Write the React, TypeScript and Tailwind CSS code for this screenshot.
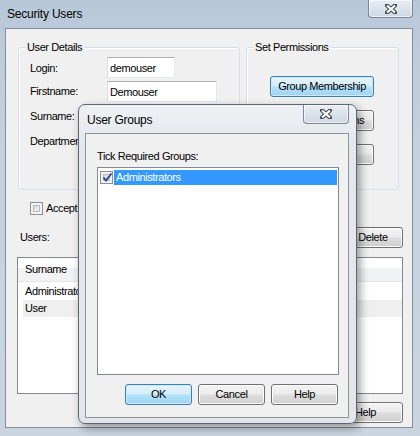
import React from 'react';
import clsx from 'clsx';

const CloseGlyph = () => (
  <svg width="12" height="10" viewBox="0 0 12 10">
    <path d="M2 1.5 L10 8.5 M10 1.5 L2 8.5" stroke="#454a52" strokeWidth="4.2" strokeLinecap="round" />
    <path d="M2 1.5 L10 8.5 M10 1.5 L2 8.5" stroke="#ffffff" strokeWidth="2.2" strokeLinecap="butt" />
  </svg>
);

const CloseBox = ({ className }: { className?: string }) => (
  <div
    className={clsx(
      'flex items-center justify-center rounded-b-[4px] border border-t-0 border-[#7d8894] bg-[linear-gradient(180deg,#e9eef4_0%,#d9e1ea_55%,#cfd8e3_100%)] shadow-[inset_0_0_0_1px_rgba(255,255,255,0.6)]',
      className
    )}
  >
    <CloseGlyph />
  </div>
);

const WinButton = ({
  children,
  focused,
  className,
}: {
  children: React.ReactNode;
  focused?: boolean;
  className?: string;
}) => (
  <button
    className={clsx(
      'flex h-[21px] items-center justify-center overflow-hidden whitespace-nowrap rounded-[3px] border text-[11px] leading-none tracking-[-0.4px] text-black',
      focused
        ? 'border-[#3c7fb1] bg-[linear-gradient(180deg,#e5f4fc_0%,#d4eefb_48%,#b3e0f9_52%,#9fd5f4_100%)] shadow-[inset_0_0_0_1px_#cdebfb]'
        : 'border-[#707070] bg-[linear-gradient(180deg,#f2f2f2_0%,#ebebeb_48%,#dddddd_52%,#cfcfcf_100%)] shadow-[inset_0_0_0_1px_#fcfcfc]',
      className
    )}
  >
    {children}
  </button>
);

const CheckBox = ({ checked }: { checked?: boolean }) => (
  <span className="flex h-[13px] w-[13px] shrink-0 border border-[#8e8f8f] bg-[#f4f4f4] p-[2px]">
    <span className="relative flex h-full w-full items-center justify-center border border-[#b6b9bd] bg-[linear-gradient(135deg,#d6d8db_0%,#f5f5f5_100%)]">
      {checked && (
        <svg className="absolute left-[-2px] top-[-3px]" width="11" height="11" viewBox="0 0 11 11">
          <path d="M1.5 5.5 L4 8.5 L9.5 1.5" stroke="#31467e" strokeWidth="1.9" fill="none" />
        </svg>
      )}
    </span>
  </span>
);

const TextBox = ({ value, className }: { value: string; className?: string }) => (
  <input
    readOnly
    value={value}
    className={clsx(
      'h-[21px] border border-[#abadb3] border-b-[#e3e9ef] border-l-[#dbdfe6] border-r-[#e3e9ef] bg-white px-[2px] text-[11px] tracking-[-0.4px] text-black outline-none',
      className
    )}
  />
);

export default function App() {
  return (
    <div className="relative h-[436px] w-[420px] overflow-hidden bg-[linear-gradient(180deg,#b9c8d9_0%,#c4d1df_35%,#cbd5e1_100%)] font-['Liberation_Sans',Arial,sans-serif] text-[11px] text-black">
      {/* Security Users window */}
      <div className="flex h-[28px] items-start justify-between px-[7px]">
        <span className="mt-[6px] text-[12px] leading-[16px] tracking-[-0.2px]">Security Users</span>
        <CloseBox className="h-[18px] w-[45px]" />
      </div>
      <div className="ml-[5px] flex h-[400px] w-[408px] flex-col border border-[#7f8d9c] bg-[#f0f0f0] pl-[11px] pr-[9px] pt-[18px]">
        <div className="ml-[1px] flex h-[143px] gap-[6px]">
          {/* User Details */}
          <div className="relative w-[222px] rounded-[3px] border border-[#d5dfe5] pl-[11px] pt-[9px] shadow-[inset_1px_1px_0_#ffffff]">
            <span className="absolute left-[6px] top-[-8px] bg-[#f0f0f0] px-[2px] leading-[14px] tracking-[-0.4px]">User Details</span>
            <div className="flex h-[21px] items-center">
              <span className="w-[77px] pt-[2px] tracking-[-0.4px]">Login:</span>
              <TextBox value="demouser" className="w-[68px]" />
            </div>
            <div className="mt-[3px] flex h-[21px] items-center">
              <span className="w-[77px] tracking-[-0.4px]">Firstname:</span>
              <TextBox value="Demouser" className="w-[110px]" />
            </div>
            <div className="mt-[4px] flex h-[21px] items-center">
              <span className="w-[77px] tracking-[-0.4px]">Surname:</span>
              <TextBox value="User" className="w-[110px]" />
            </div>
            <div className="mt-[4px] flex h-[21px] items-center">
              <span className="w-[77px] whitespace-nowrap tracking-[-0.4px]">Department:</span>
              <TextBox value="" className="w-[110px]" />
            </div>
          </div>

          {/* Set Permissions */}
          <div className="relative flex w-[153px] flex-col gap-[13px] rounded-[3px] border border-[#d5dfe5] pl-[23px] pt-[28px] shadow-[inset_1px_1px_0_#ffffff]">
            <span className="absolute left-[6px] top-[-8px] bg-[#f0f0f0] px-[2px] leading-[14px] tracking-[-0.4px]">Set Permissions</span>
            <WinButton focused className="w-[104px]">Group Membership</WinButton>
            <WinButton className="w-[104px]">Menu Permissions</WinButton>
            <WinButton className="w-[104px]">Copy User</WinButton>
          </div>
        </div>

        <div className="mt-[12px] flex h-[13px] items-center pl-[13px]">
          <CheckBox />
          <span className="ml-[3px] tracking-[-0.4px]">Accept Changes</span>
        </div>

        <div className="mt-[12px] flex h-[21px] items-center justify-between">
          <span className="pl-[3px] tracking-[-0.4px]">Users:</span>
          <WinButton className="w-[60px]">Delete</WinButton>
        </div>

        <div className="mt-[9px] flex h-[137px] flex-col border border-[#828790] bg-white">
          <div className="flex h-[24px] items-center border-b border-[#e4e6e9] bg-[linear-gradient(180deg,#ffffff_0%,#ffffff_42%,#f1f2f4_46%,#f1f2f4_100%)] pl-[7px] tracking-[-0.4px]">
            Surname
          </div>
          <div className="mt-[1px] flex h-[17px] items-center pl-[7px] tracking-[-0.4px]">Administrator</div>
          <div className="ml-[5px] flex h-[17px] items-center bg-[#efefef] pl-[2px] tracking-[-0.4px]">User</div>
        </div>

        <div className="mt-[8px] flex justify-end">
          <WinButton className="w-[75px]">Help</WinButton>
        </div>
      </div>

      {/* User Groups dialog */}
      <div className="absolute left-[78px] top-[104px] flex h-[320px] w-[279px] flex-col rounded-[7px] border border-[#5d6773] bg-[linear-gradient(180deg,#eef1f4_0%,#e4e8ed_12%,#e2e6eb_100%)] pb-[5px] pl-[6px] pr-[7px] shadow-[3px_4px_10px_rgba(0,0,0,0.4)]">
        <div className="flex h-[28px] items-start justify-between">
          <span className="mt-[7px] pl-[2px] text-[12px] leading-[16px] tracking-[-0.25px]">User Groups</span>
          <CloseBox className="h-[19px] w-[46px]" />
        </div>
        <div className="flex flex-1 flex-col border border-[#8c939b] bg-[#f0f0f0] pb-[12px] pl-[11px] pr-[9px] pt-[15px]">
          <span className="leading-[14px] tracking-[-0.4px]">Tick Required Groups:</span>
          <div className="mt-[4px] h-[208px] border border-[#828790] bg-white pt-[2px]">
            <div className="flex h-[15px] items-center pl-[2px]">
              <CheckBox checked />
              <span className="ml-[1px] mr-[1px] flex h-[15px] flex-1 items-center bg-[#3399ff] pl-[2px] tracking-[-0.4px] text-white">
                Administrators
              </span>
            </div>
          </div>
          <div className="mt-[9px] flex justify-end gap-[6px] pr-[1px]">
            <WinButton focused className="w-[67px]">OK</WinButton>
            <WinButton className="w-[67px]">Cancel</WinButton>
            <WinButton className="w-[67px]">Help</WinButton>
          </div>
        </div>
      </div>
    </div>
  );
}
